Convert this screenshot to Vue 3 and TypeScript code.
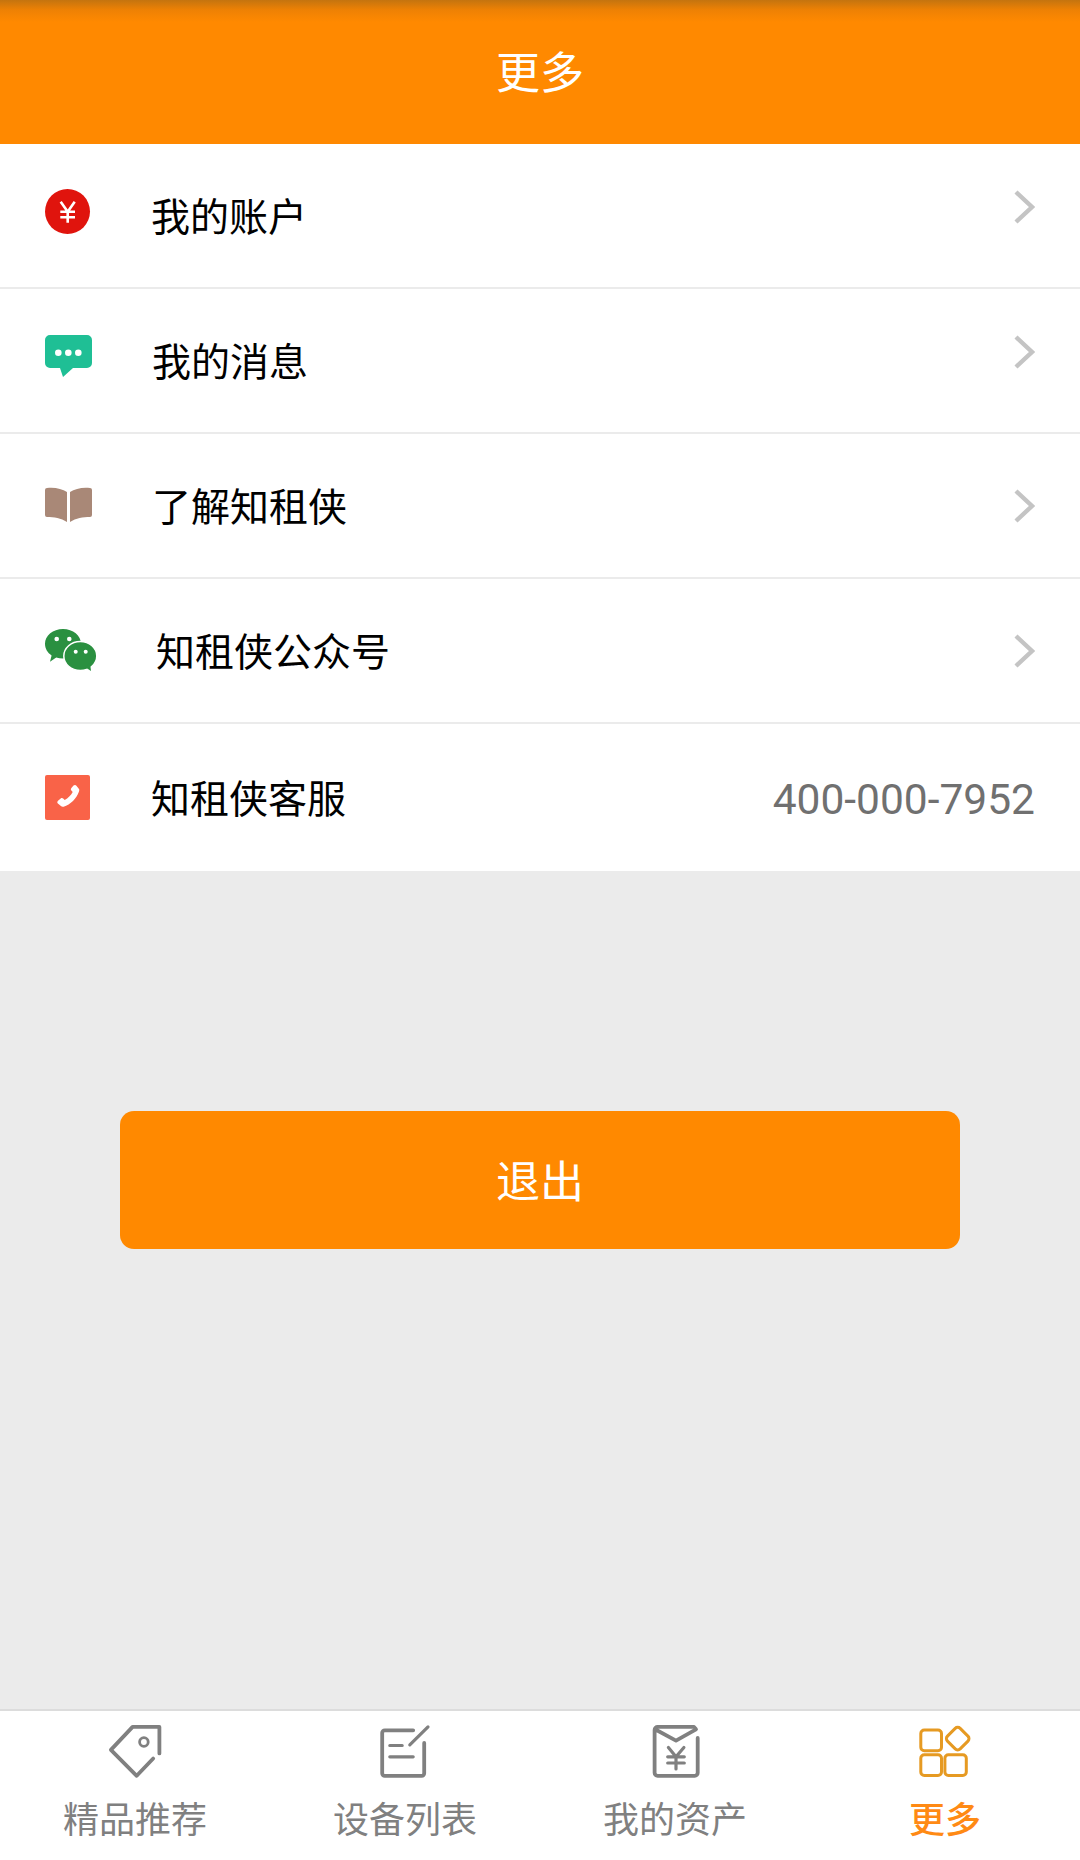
<script setup lang="ts">
interface Row {
  key: string;
  label: string;
  phone?: string;
}

const rows: Row[] = [
  { key: "account", label: "我的账户" },
  { key: "message", label: "我的消息" },
  { key: "about", label: "了解知租侠" },
  { key: "wechat", label: "知租侠公众号" },
  { key: "service", label: "知租侠客服", phone: "400-000-7952" },
];

const tabs = [
  { key: "tag", label: "精品推荐" },
  { key: "list", label: "设备列表" },
  { key: "asset", label: "我的资产" },
  { key: "more", label: "更多" },
];
</script>

<template>
  <div class="page">
    <header class="header">更多</header>

    <ul class="list">
      <li v-for="row in rows" :key="row.key" class="row" :class="`row-${row.key}`">
        <span class="icon">
          <svg v-if="row.key === 'account'" width="46" height="46" viewBox="0 0 46 46">
            <circle cx="22.5" cy="22.5" r="22.5" fill="#e0140d" />
            <path d="M15.7 12.7l7 10 7-10M15.3 22.7H30M15.3 28.3H30M22.7 22.7v11" fill="none" stroke="#fff" stroke-width="2.6" />
          </svg>
          <svg v-else-if="row.key === 'message'" width="47" height="42" viewBox="0 0 47 42">
            <path d="M5 0h37a5 5 0 0 1 5 5v23a5 5 0 0 1-5 5H28L18 42l-3-9H5a5 5 0 0 1-5-5V5a5 5 0 0 1 5-5z" fill="#1fbf95" />
            <circle cx="13.3" cy="17.7" r="3.3" fill="#fff" />
            <circle cx="23.3" cy="17.7" r="3.3" fill="#fff" />
            <circle cx="33.3" cy="17.7" r="3.3" fill="#fff" />
          </svg>
          <svg v-else-if="row.key === 'about'" width="47" height="36" viewBox="0 0 47 36">
            <path d="M0 3Q0 1 2 1C10 0 17 2 22 5V35C16 31 9 30 2 30Q0 30 0 28Z" fill="#a98877" />
            <path d="M47 3Q47 1 45 1C37 0 30 2 25 5V35C31 31 38 30 45 30Q47 30 47 28Z" fill="#a98877" />
          </svg>
          <svg v-else-if="row.key === 'wechat'" width="52" height="43" viewBox="0 0 52 43">
            <path d="M18 0c10 0 18 6.600 18 14.700S28 29.400 18 29.400c-2.400 0-4.700-.4-6.800-1L5 32.700l1.600-6.300C2.500 23.700 0 19.500 0 14.700 0 6.600 8 0 18 0z" fill="#2a9040" />
            <ellipse cx="35.300" cy="27" rx="16.500" ry="14.500" fill="#2a9040" stroke="#fff" stroke-width="1.500" />
            <path d="M40 38l6 4-1-8z" fill="#2a9040" />
            <circle cx="11.700" cy="10" r="2.300" fill="#fff" />
            <circle cx="24.300" cy="10" r="2.300" fill="#fff" />
            <circle cx="30.700" cy="22.700" r="2" fill="#fff" />
            <circle cx="40.700" cy="22.700" r="2" fill="#fff" />
          </svg>
          <svg v-else width="45" height="45" viewBox="0 0 45 45">
            <rect width="45" height="45" rx="2" fill="#f96348" />
            <path d="M28.500 10.500c1-.8 2.200-.7 2.900.2l2.400 3c.6.800.6 1.700.2 2.700-2.300 6.900-8.500 13.100-15.400 15.300-1 .3-2 .1-2.700-.6l-3-2.500c-.8-.8-.8-2 .1-2.800l2.700-2.300c.8-.6 1.800-.6 2.500.1l1.500 1.400c3.400-1.900 6.200-4.800 8-8.100l-1.300-1.400c-.7-.8-.7-1.800 0-2.600z" fill="#fff" />
          </svg>
        </span>
        <span class="label">{{ row.label }}</span>
        <span v-if="row.phone" class="phone">{{ row.phone }}</span>
        <svg v-else class="chevron" width="22" height="36" viewBox="0 0 22 36">
          <path d="M3 3l16 15L3 33" fill="none" stroke="#c4c4c4" stroke-width="4.400" />
        </svg>
      </li>
    </ul>

    <main class="content">
      <button class="logout">退出</button>
    </main>

    <nav class="tabbar">
      <div v-for="tab in tabs" :key="tab.key" class="tab" :class="{ active: tab.key === 'more' }">
        <svg v-if="tab.key === 'tag'" width="60" height="60" viewBox="0 0 60 60" fill="none" stroke="#808080" stroke-width="3.800" stroke-linejoin="round" stroke-linecap="round">
          <path d="M48.200 38.500L31.700 55.800 5.900 29.900 27.600 6.900H54.400V33.400" />
          <circle cx="38.900" cy="22" r="4.300" stroke-width="2.800" />
        </svg>
        <svg v-else-if="tab.key === 'list'" width="60" height="60" viewBox="0 0 60 60" fill="none" stroke="#808080" stroke-width="3.800" stroke-linejoin="round" stroke-linecap="round">
          <path d="M38.200 10.300H9.700a2.500 2.500 0 0 0-2.500 2.500v40.500a2.500 2.500 0 0 0 2.500 2.500h37a2.500 2.500 0 0 0 2.500-2.500V23" />
          <path d="M34.800 24.800L53 6.900M14.800 25.500H27.200M14.800 36.800H38.200" stroke-width="3.200" />
        </svg>
        <svg v-else-if="tab.key === 'asset'" width="60" height="60" viewBox="0 0 60 60" fill="none" stroke="#808080" stroke-width="3.800" stroke-linejoin="round" stroke-linecap="round">
          <path d="M52.700 18V52.800a3 3 0 0 1-3 3H12.600a3 3 0 0 1-3-3V9.900a3 3 0 0 1 3-3H49L51 9.300 31 20.600 10.500 9.500" />
          <path d="M23.400 27.500L31 36.800l7.900-9.300M22.700 36.800H39.300M22.700 43H39.300M31 36.800V48.900" stroke-width="3.200" />
        </svg>
        <svg v-else class="more-icon" width="60" height="60" viewBox="0 0 60 60" fill="none" stroke="#e69a22" stroke-width="3">
          <rect x="5.800" y="11" width="20.700" height="20.700" rx="3.500" />
          <rect x="5.800" y="35.800" width="20.700" height="20.700" rx="3.500" />
          <rect x="29.900" y="35.800" width="21.400" height="20.700" rx="3.500" />
          <rect x="33.700" y="10.600" width="18" height="18" rx="3.500" transform="rotate(45 42.700 19.600)" />
        </svg>
        <span class="tab-label">{{ tab.label }}</span>
      </div>
    </nav>
  </div>
</template>

<style scoped>
.page {
  width: 1080px;
  height: 1860px;
  display: flex;
  flex-direction: column;
  background: #ebebeb;
  font-family: "Noto Sans CJK SC", "Liberation Sans", sans-serif;
}
.header {
  height: 144px;
  box-sizing: border-box;
  padding-bottom: 4px;
  display: flex;
  align-items: center;
  justify-content: center;
  background: linear-gradient(to bottom, #c4740f 0, #ee8104 10px, #ff8900 22px);
  color: #fff;
  font-size: 44px;
}
.list {
  margin: 0;
  padding: 0;
  list-style: none;
  background: #fff;
}
.row {
  height: 145px;
  box-sizing: border-box;
  display: flex;
  align-items: center;
  padding: 0 45px;
  border-bottom: 2px solid #ebebeb;
  color: #000;
  font-size: 39px;
}
.row:last-child {
  height: 147px;
  border-bottom: none;
}
.icon {
  display: flex;
  width: 106px;
  flex-shrink: 0;
  margin-bottom: 8px;
}
.row-message .icon {
  margin-bottom: 10px;
}
.row-about .icon {
  margin-bottom: 2px;
}
.row-wechat .icon,
.row-service .icon {
  margin-bottom: 0;
}
.row-message .label {
  margin-left: 1px;
}
.row-about .label {
  margin-left: 1px;
}
.row-wechat .label {
  margin-left: 5px;
}
.row-account .chevron,
.row-message .chevron {
  margin-bottom: 18px;
}
.label {
  flex: 1;
  margin-bottom: 3px;
}
.chevron {
  flex-shrink: 0;
}
.phone {
  margin-top: 3px;
  color: #707070;
  font-family: Roboto, "Liberation Sans", sans-serif;
  font-size: 42.5px;
}
.content {
  flex: 1;
  padding: 240px 120px 0;
}
.logout {
  display: block;
  width: 100%;
  height: 138px;
  padding: 0 0 2px;
  border: none;
  border-radius: 14px;
  background: #ff8900;
  color: #fff;
  font-family: inherit;
  font-size: 44px;
}
.tabbar {
  height: 151px;
  box-sizing: border-box;
  display: grid;
  grid-template-columns: repeat(4, 1fr);
  padding-top: 9px;
  border-top: 2px solid #dcdcdc;
  background: #fff;
}
.tab {
  display: flex;
  flex-direction: column;
  align-items: center;
}
.more-icon {
  margin-top: -1px;
  margin-bottom: 1px;
}
.tab-label {
  margin-top: 12px;
  color: #808080;
  font-size: 36px;
  line-height: 50px;
}
.active .tab-label {
  color: #ff8a14;
  font-weight: 500;
}
</style>
